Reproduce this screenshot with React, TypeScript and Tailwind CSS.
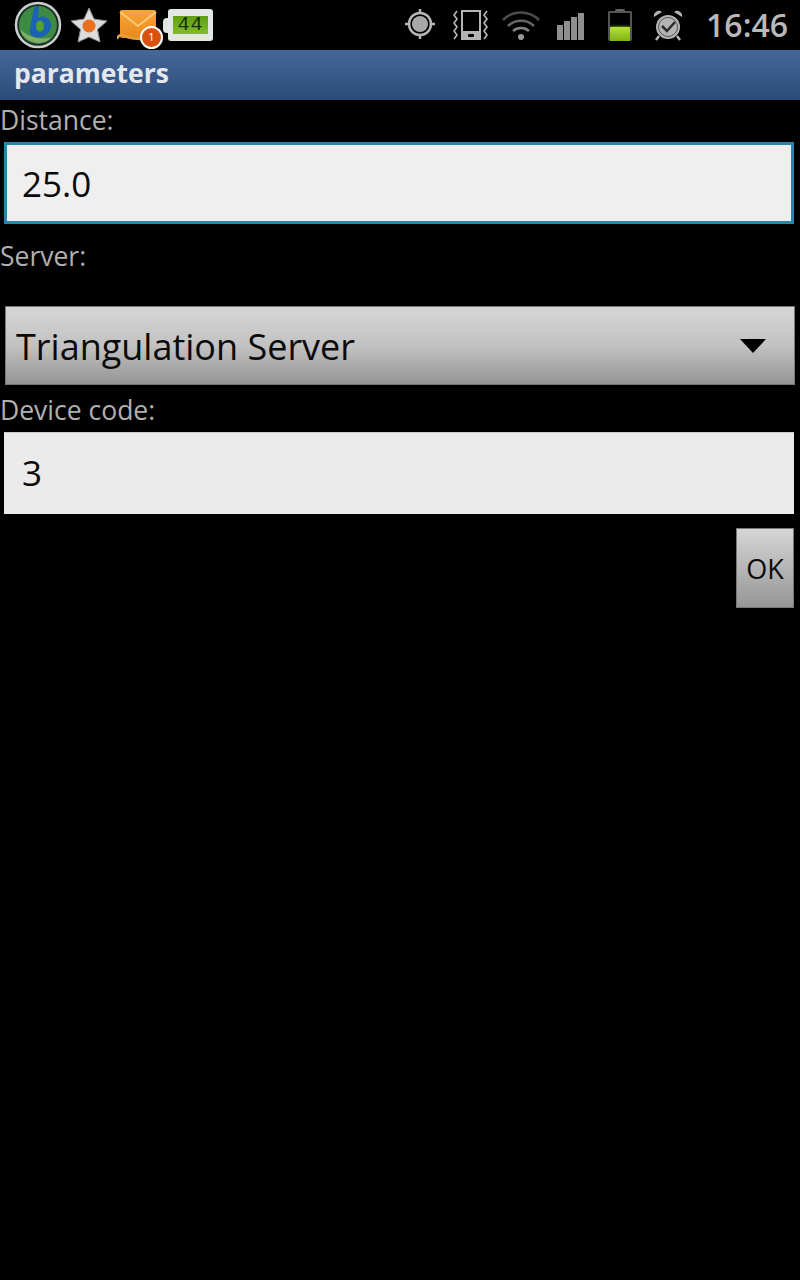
import * as React from 'react';

const font = { fontFamily: '"Open Sans", "Noto Sans", sans-serif' };

const AppIcons = () => (
  <div className="flex items-center">
    {/* browser globe */}
    <svg width="48" height="48" viewBox="0 0 48 48" className="ml-[14px]">
      <circle cx="24" cy="24" r="22" fill="#1c2a22" stroke="#c9cfcc" strokeWidth="2.5" />
      <circle cx="24" cy="24" r="19" fill="#3d8a42" />
      <path d="M6 28a19 19 0 0 0 32 8c-8 3-22 2-32-8z" fill="#7fae6a" />
      <path d="M20 6l5-1-1 12c7-4 14 1 13 9-2 10-14 13-20 8-2-2-1-6 0-12z" fill="#1b62b5" />
      <ellipse cx="26" cy="25" rx="4" ry="5.5" fill="#55a030" />
    </svg>
    {/* star */}
    <svg width="40" height="40" viewBox="0 0 40 40" className="ml-[7px]">
      <path d="M20 3l5 11 13 2-9.5 8.5L31 37l-11-5-11 5 2.500-12.500L2 16l13-2z" fill="#dcdcdc" stroke="#8a8a8a" strokeWidth="1" strokeLinejoin="round" />
      <circle cx="20" cy="21" r="6.500" fill="#e8701e" />
    </svg>
    {/* mail with badge */}
    <div className="relative ml-[8px] h-[40px] w-[46px]">
      <svg width="46" height="40" viewBox="0 0 46 40">
        <defs>
          <linearGradient id="mail" x1="0" y1="0" x2="0" y2="1">
            <stop offset="0" stopColor="#f7a63a" />
            <stop offset="1" stopColor="#e98a1c" />
          </linearGradient>
        </defs>
        <rect x="3" y="5" width="36" height="28" rx="2" fill="url(#mail)" />
        <path d="M3 7l18 14L39 7" fill="none" stroke="#ffc877" strokeWidth="2" />
        <path d="M0 34c1-4 5-5 8-3 7 4 15 2 21 4" fill="none" stroke="#e2a040" strokeWidth="2.500" />
      </svg>
      <div className="absolute left-[23px] top-[21px] flex h-[23px] w-[23px] items-center justify-center rounded-full border-2 border-white bg-[#d9520f] text-[11px] text-white">1</div>
    </div>
    {/* battery widget */}
    <div className="ml-0 flex items-center">
      <div className="h-[15px] w-[5px] rounded-l-sm bg-[#dfe5e2]" />
      <div className="flex h-[32px] w-[45px] items-center justify-center rounded-[3px] bg-[#e3e8e5]">
        <div className="flex h-[18px] w-[35px] items-center justify-center bg-gradient-to-b from-[#5f9e14] to-[#83bb2c] text-[20px] leading-none tracking-[1px] text-[#15300a]" style={{ fontFamily: '"Liberation Mono", monospace' }}>44</div>
      </div>
    </div>
  </div>
);

const StatusIcons = () => (
  <div className="flex items-center text-[#b4b4b4]">
    {/* gps */}
    <svg width="32" height="32" viewBox="0 0 32 32" className="-mt-[2px]">
      <circle cx="16" cy="16" r="11" fill="none" stroke="#b8b8b8" strokeWidth="2.500" />
      <circle cx="16" cy="16" r="8" fill="#a8a8a8" />
      <path d="M16 1v5M16 26v5M1 16h5M26 16h5" stroke="#b8b8b8" strokeWidth="2.500" />
    </svg>
    {/* vibrate */}
    <svg width="38" height="32" viewBox="0 0 38 32" className="ml-[16px]">
      <path d="M4 1L1 5l3 4-3 4 3 4-3 4 3 4-3 4" transform="translate(1 1)" fill="none" stroke="#b8b8b8" strokeWidth="1.600" />
      <path d="M34 1l-3 4 3 4-3 4 3 4-3 4 3 4-3 4" transform="translate(1 1)" fill="none" stroke="#b8b8b8" strokeWidth="1.600" />
      <path d="M9 1h20v30H9z" fill="#b4b4b4" />
      <path d="M11 3h16v19H11z" fill="#000" />
      <rect x="16" y="25" width="6" height="3" rx="1" fill="#000" />
    </svg>
    {/* wifi */}
    <svg width="38" height="32" viewBox="0 0 38 32" className="ml-[12px]">
      <path d="M1 11c10-10 26-10 36 0" fill="none" stroke="#4c4c4c" strokeWidth="2.500" />
      <path d="M6 17c7-7 19-7 26 0" fill="none" stroke="#666" strokeWidth="2.500" />
      <path d="M11 22c4-4 12-4 16 0" fill="none" stroke="#848484" strokeWidth="2.500" />
      <circle cx="19" cy="28" r="3" fill="#999" />
    </svg>
    {/* signal */}
    <svg width="28" height="27" viewBox="0 0 28 27" className="ml-[17px] mt-[3px]">
      <path d="M0 12h6v15H0zM7 8h6v19H7zM14 4h6v23h-6zM21 0h6v27h-6z" fill="#8f8f8f" />
    </svg>
    {/* battery */}
    <div className="ml-[23px] flex h-[32px] w-[24px] flex-col items-center">
      <div className="h-[2px] w-[10px] rounded-t-sm bg-[#666]" />
      <div className="flex h-[30px] w-[24px] flex-col justify-end overflow-hidden rounded-[2px] border-2 border-b-0 border-[#555]">
        <div className="h-[14px] bg-gradient-to-b from-[#b5e23a] to-[#7fb312] shadow-[0_0_3px_#9fe02a]" />
      </div>
    </div>
    {/* alarm */}
    <svg width="30" height="32" viewBox="0 0 30 32" className="ml-[21px]">
      <circle cx="15" cy="18" r="12" fill="#b4b4b4" />
      <circle cx="15" cy="18" r="9.500" fill="none" stroke="#555" strokeWidth="1" />
      <path d="M9 17l5 5 8-9" fill="none" stroke="#2a2a2a" strokeWidth="2.500" />
      <path d="M1 8a5 5 0 0 1 8-5zM29 8a5 5 0 0 0-8-5z" fill="#b4b4b4" />
      <path d="M6 27l-3 4M24 27l3 4" stroke="#b4b4b4" strokeWidth="2.500" />
    </svg>
    <span className="ml-[23px] mr-[12px] text-[32px] leading-none font-semibold text-[#b9b9b9]">16:46</span>
  </div>
);

const Label = ({ children, className = '' }: { children: React.ReactNode; className?: string }) => (
  <div className={`text-[26.500px] leading-[40px] text-[#b0b0b0] ${className}`}>{children}</div>
);

const App = () => {
  return (
    <div className="flex h-[1280px] w-[800px] flex-col overflow-hidden bg-black" style={font}>
      <div className="flex h-[50px] items-center justify-between">
        <AppIcons />
        <StatusIcons />
      </div>
      <div className="flex h-[50px] items-center bg-gradient-to-b from-[#466798] to-[#2b4c7a] pb-[3px] pl-[14px] text-[26.500px] font-bold text-[#e4e8ee]">
        parameters
      </div>

      <Label className="h-[42px]">Distance:</Label>
      <div className="mx-[4px] flex h-[82px] w-[790px] items-center border-[3px] border-[#2a84ac] bg-[#efefef] pl-[15px] pt-[2px] text-[35px] text-[#0a0a0a]">
        25.0
      </div>

      <Label className="mt-[12px] h-[70px]">Server:</Label>
      <div className="ml-[5px] flex h-[79px] w-[790px] items-center justify-between border border-[#777] bg-gradient-to-b from-[#d6d6d6] via-[#c2c2c2] to-[#959595] pl-[10px] pr-[28px] pt-[2px] text-[36px] text-[#0a0a0a]">
        <span>Triangulation Server</span>
        <svg width="26" height="14" viewBox="0 0 26 14" className="-mt-[2px]">
          <path d="M0 0h26L13 14z" fill="#000" />
        </svg>
      </div>

      <Label className="mt-[5px] h-[42px]">Device code:</Label>
      <div className="ml-[4px] flex h-[82px] w-[790px] items-center border-t border-[#cfcfcf] bg-[#ebebeb] pl-[18px] text-[35px] text-[#0a0a0a]">
        3
      </div>

      <div className="mt-[14px] flex justify-end pr-[6px]">
        <button className="flex h-[80px] w-[58px] items-center justify-center border border-[#777] bg-gradient-to-b from-[#d6d6d6] to-[#969696] pt-[3px] text-[27px] text-[#0a0a0a]">
          OK
        </button>
      </div>
    </div>
  );
};

export default App;
